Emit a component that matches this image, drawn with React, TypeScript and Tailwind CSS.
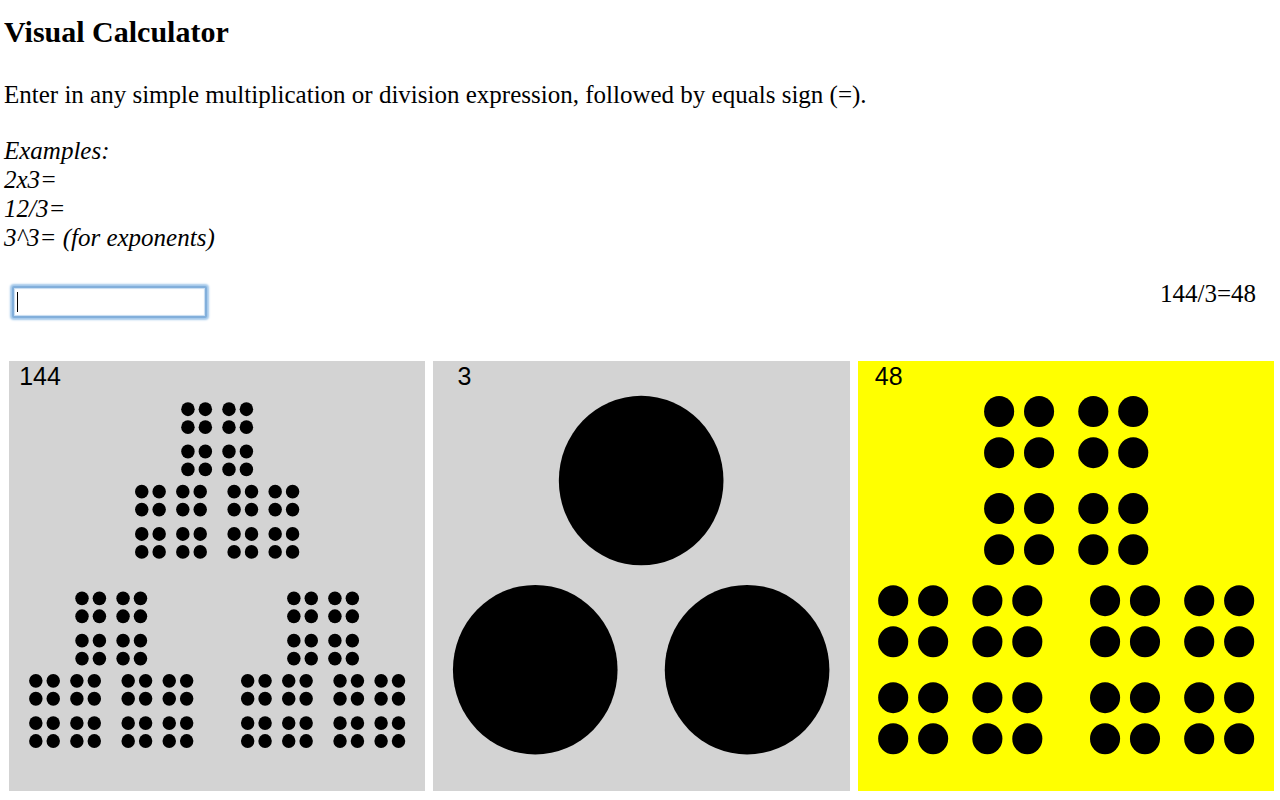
import { useState } from "react";
import type { ChangeEvent } from "react";

type Point = { x: number; y: number };
type Layout = { scale: number; spots: Point[] };
type Result = { left: number; right: number; answer: number; text: string };

const ASPECT = 1.03;
const MAX_DOTS = 5000;

/** Breaks a count into nested group sizes, largest groups first and fours innermost. */
function groupSizes(count: number): number[] {
  const sizes: number[] = [];
  let rest = count;
  while (rest > 1 && rest % 4 === 0) {
    sizes.push(4);
    rest /= 4;
  }
  for (let p = 2; rest > 1; ) {
    if (rest % p === 0) {
      sizes.unshift(p);
      rest /= p;
    } else {
      p += 1;
    }
  }
  return sizes;
}

function layoutFor(size: number): Layout {
  if (size === 2) {
    return { scale: 0.424, spots: [{ x: -0.574, y: 0 }, { x: 0.574, y: 0 }] };
  }
  if (size === 3) {
    return {
      scale: 0.436,
      spots: [{ x: 0, y: -0.488 }, { x: -0.563, y: 0.488 }, { x: 0.563, y: 0.488 }],
    };
  }
  if (size === 4) {
    return {
      scale: 0.424,
      spots: [
        { x: -0.574, y: -0.574 },
        { x: 0.574, y: -0.574 },
        { x: -0.574, y: 0.574 },
        { x: 0.574, y: 0.574 },
      ],
    };
  }
  const sine = Math.sin(Math.PI / size);
  const scale = (0.88 * sine) / (1 + sine);
  const spots = Array.from({ length: size }, (_, i) => {
    const angle = (2 * Math.PI * i) / size - Math.PI / 2;
    return { x: (1 - scale) * Math.cos(angle), y: (1 - scale) * Math.sin(angle) };
  });
  return { scale, spots };
}

function placeDots(count: number) {
  let radius = 188;
  let dots: Point[] = [{ x: 208, y: 179 }];
  for (const size of groupSizes(count)) {
    const { scale, spots } = layoutFor(size);
    const r = radius;
    dots = dots.flatMap((d) =>
      spots.map((s) => ({ x: d.x + s.x * r, y: d.y + s.y * r * ASPECT })),
    );
    radius *= scale;
  }
  return { radius: count === 1 ? 170 : radius, dots };
}

function evaluate(expression: string): Result | null {
  const match = /^\s*(\d+)\s*([x*/^])\s*(\d+)\s*=$/i.exec(expression);
  if (!match) return null;
  const left = Number(match[1]);
  const right = Number(match[3]);
  const op = match[2];
  const answer = op === "/" ? left / right : op === "^" ? left ** right : left * right;
  const drawable = [left, right, answer].every(
    (n) => Number.isInteger(n) && n > 0 && n <= MAX_DOTS,
  );
  return drawable ? { left, right, answer, text: `${left}${op}${right}=${answer}` } : null;
}

function DotPanel({ count, highlight = false }: { count: number; highlight?: boolean }) {
  const { radius, dots } = placeDots(count);
  return (
    <figure className={highlight ? "bg-[#ffff00]" : "bg-[#d3d3d3]"}>
      <figcaption className="h-[35px] w-[62px] text-center font-['Liberation_Sans',sans-serif] leading-[30px]">
        {count}
      </figcaption>
      <svg viewBox="0 0 416 395" className="block h-auto w-full overflow-visible" aria-hidden="true">
        {dots.map((d, i) => (
          <ellipse key={i} cx={d.x} cy={d.y} rx={radius + 0.3} ry={radius * ASPECT + 0.3} />
        ))}
      </svg>
    </figure>
  );
}

export default function App() {
  const [entry, setEntry] = useState("");
  const [focused, setFocused] = useState(true);
  const [result, setResult] = useState<Result>({
    left: 144,
    right: 3,
    answer: 48,
    text: "144/3=48",
  });

  function handleChange(event: ChangeEvent<HTMLInputElement>) {
    const value = event.target.value;
    const next = evaluate(value);
    if (next) {
      setResult(next);
      setEntry("");
    } else {
      setEntry(value);
    }
  }

  return (
    <main className="bg-white pt-4 font-['Liberation_Serif',serif] text-[25px] leading-[29px] text-black">
      <header className="px-1">
        <h1 className="text-[30px] leading-8 font-bold">Visual Calculator</h1>
        <p className="mt-8">
          <label htmlFor="expression">
            Enter in any simple multiplication or division expression, followed by equals sign (=).
          </label>
        </p>
        <div className="mt-[27px] italic">
          <p>Examples:</p>
          <p>2x3=</p>
          <p>12/3=</p>
          <p>3^3= (for exponents)</p>
        </div>
      </header>
      <div className="mt-[27px] flex items-start justify-between pr-6 pl-3">
        <div className="relative mt-[7px]">
          <input
            id="expression"
            type="text"
            autoFocus
            autoComplete="off"
            value={entry}
            onChange={handleChange}
            onFocus={() => setFocused(true)}
            onBlur={() => setFocused(false)}
            className={`block h-8 w-[195px] rounded-xs border-2 bg-white px-1 text-xl outline-none ${
              entry === "" ? "caret-transparent" : "caret-black"
            } ${
              focused
                ? "border-[#82afdb] shadow-[0_0_2px_2px_#a3c8ea,inset_0_0_1px_1px_#c6dcf1]"
                : "border-gray-400"
            }`}
          />
          {focused && entry === "" && (
            <span className="pointer-events-none absolute top-[6px] left-[5px] h-5 w-px bg-black" />
          )}
        </div>
        <output htmlFor="expression">{result.text}</output>
      </div>
      <section className="mt-[43px] grid grid-cols-3 gap-2 pr-[6px] pb-2 pl-[9px]">
        <DotPanel count={result.left} />
        <DotPanel count={result.right} />
        <DotPanel count={result.answer} highlight />
      </section>
    </main>
  );
}
